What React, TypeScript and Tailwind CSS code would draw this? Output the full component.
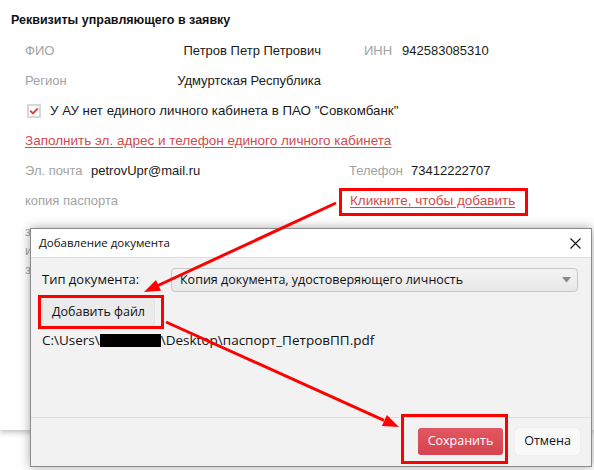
import React from "react";

// Заявка: реквизиты управляющего + диалог добавления документа поверх

const pageFont = "font-['Liberation_Sans',Arial,sans-serif]";
const dlgFont = "font-['Open_Sans','Noto_Sans',sans-serif]";

function Label({ children, className = "" }: { children: React.ReactNode; className?: string }) {
  return <span className={`text-[#a3a3a3] ${className}`}>{children}</span>;
}

function PageForm() {
  return (
    <div className="h-[430px] bg-white shadow-[0_2px_6px_rgba(0,0,0,0.28)] text-[13px] text-[#1a1a1a]">
      <h1 className="pl-[11px] pt-[12px] text-[12.5px] font-bold leading-[16px] text-[#111]">
        Реквизиты управляющего в заявку
      </h1>
      <div className="mt-[8px]">
        <div className="flex h-[30px] items-center pl-[25px]">
          <Label className="w-[100px]">ФИО</Label>
          <span className="w-[196px] text-right">Петров Петр Петрович</span>
          <Label className="ml-[43px] w-[38px]">ИНН</Label>
          <span>942583085310</span>
        </div>
        <div className="flex h-[30px] items-center pl-[25px]">
          <Label className="w-[100px]">Регион</Label>
          <span className="w-[196px] text-right">Удмуртская Республика</span>
        </div>
        <div className="flex h-[30px] items-center pl-[27px]">
          <span className="flex h-[14px] w-[14px] items-center justify-center border-2 border-[#d8d8d8] bg-white">
            <svg width="10" height="10" viewBox="0 0 10 10">
              <path d="M1.2 4.8 L4 7.4 L8.8 2.4" fill="none" stroke="#d5434d" strokeWidth="2" />
            </svg>
          </span>
          <span className="ml-[9px] text-[13.3px]">У АУ нет единого личного кабинета в ПАО "Совкомбанк"</span>
        </div>
        <div className="flex h-[30px] items-center pl-[25px]">
          <a className="text-[13.5px] text-[#cf4a50] underline underline-offset-2">
            Заполнить эл. адрес и телефон единого личного кабинета
          </a>
        </div>
        <div className="flex h-[30px] items-center pl-[25px]">
          <Label className="w-[66px]">Эл. почта</Label>
          <span className="w-[258px]">petrovUpr@mail.ru</span>
          <Label className="w-[62px]">Телефон</Label>
          <span>73412222707</span>
        </div>
        <div className="flex h-[30px] items-center pl-[25px]">
          <Label className="w-[325px]">копия паспорта</Label>
          <a className="text-[13.5px] text-[#cf4a50] underline underline-offset-2">Кликните, чтобы добавить</a>
        </div>
        <div className="pl-[25px] pt-[6px] leading-[19px]">
          <Label className="block">з</Label>
          <Label className="block">и</Label>
          <Label className="block">з</Label>
        </div>
      </div>
    </div>
  );
}

function AddDocumentDialog() {
  return (
    <div
      className={`absolute left-[30px] top-[228px] flex h-[239px] w-[562px] flex-col border border-[#8a8a8a] bg-[#f2f2f2] shadow-[0_0_10px_rgba(0,0,0,0.35)] ${dlgFont}`}
    >
      <div className="flex h-[29px] items-center justify-between border-b border-[#dedede] bg-white pl-[8px] pr-[10px]">
        <span className="text-[11.5px] text-[#111]">Добавление документа</span>
        <svg width="11" height="11" viewBox="0 0 11 11">
          <path d="M0.5 0.5 L10.5 10.5 M10.5 0.5 L0.5 10.5" stroke="#111" strokeWidth="1.1" />
        </svg>
      </div>

      <div className="h-[159px] px-[7px] pt-[10px] text-[12.5px] text-[#111]">
        <div className="flex items-center">
          <span className="w-[133px] pl-[4px] text-[13px]">Тип документа:</span>
          <div className="flex h-[24px] w-[407px] items-center justify-between rounded-[4px] border border-[#c8c8c8] bg-gradient-to-b from-[#f3f3f3] to-[#e8e8e8] pl-[8px] pr-[6px]">
            <span>Копия документа, удостоверяющего личность</span>
            <svg width="9" height="6" viewBox="0 0 9 6">
              <path d="M0 0 H9 L4.5 5.5 Z" fill="#8a8a8a" />
            </svg>
          </div>
        </div>
        <div className="mt-[3px] flex h-[34px] items-center pl-[4px]">
          <button className="h-[28px] w-[113px] rounded-[4px] border border-[#e2e2e2] bg-[#ebebeb] text-[12.5px] text-[#111]">
            Добавить файл
          </button>
        </div>
        <div className="mt-[3px] flex items-center pl-[4px] text-[13.5px] leading-[16px]">
          <span>C:\Users\</span>
          <span className="h-[13px] w-[61px] bg-black" />
          <span>\Desktop\паспорт_ПетровПП.pdf</span>
        </div>
      </div>

      <div className="flex flex-1 items-start justify-end gap-[12px] border-t border-[#dedede] pr-[11px] pt-[10px] text-[12.5px]">
        <button className="h-[27px] w-[85px] rounded-[3px] bg-gradient-to-b from-[#e25761] to-[#d5434e] text-white">
          Сохранить
        </button>
        <button className="h-[27px] w-[65px] rounded-[4px] bg-[#f9f9f9] text-[#111] shadow-[0_0_1px_rgba(0,0,0,0.15)]">
          Отмена
        </button>
      </div>
    </div>
  );
}

function Annotations() {
  return (
    <>
      <div className="absolute left-[339px] top-[188px] h-[28px] w-[189px] border-[3px] border-[#ff0000]" />
      <div className="absolute left-[38px] top-[295px] h-[34px] w-[126px] border-[3px] border-[#ff0000]" />
      <div className="absolute left-[401px] top-[414px] h-[50px] w-[107px] border-[3px] border-[#ff0000]" />
      <svg className="pointer-events-none absolute left-0 top-0" width="594" height="470">
        <line x1="336" y1="203" x2="158" y2="285.5" stroke="#ff0000" strokeWidth="3" />
        <polygon points="144,292 161,290.7 156,279.9" fill="#ff0000" />
        <line x1="166" y1="322" x2="384" y2="420.4" stroke="#ff0000" strokeWidth="3" />
        <polygon points="399,427 381.9,425.9 386.9,414.9" fill="#ff0000" />
      </svg>
    </>
  );
}

export default function App() {
  return (
    <div className={`relative h-[470px] w-[594px] overflow-hidden bg-white ${pageFont}`}>
      <PageForm />
      <AddDocumentDialog />
      <Annotations />
    </div>
  );
}
